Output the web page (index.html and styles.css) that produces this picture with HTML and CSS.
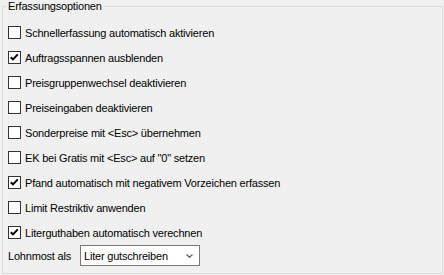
FILE: index.html
```html
<!DOCTYPE html>
<html>
<head>
	<meta charset="UTF-8">
	<title>Erfassungsoptionen</title>
	<link rel="stylesheet" href="styles.css">
</head>
<body>

<fieldset class="group">
	<legend>Erfassungsoptionen</legend>

	<div class="options">
		<div class="option"><span class="box"></span><span>Schnellerfassung automatisch aktivieren</span></div>
		<div class="option"><span class="box"><svg viewBox="0 0 11 11"><polyline points="1.8,5.2 4,7.4 8.8,2.4"/></svg></span><span>Auftragsspannen ausblenden</span></div>
		<div class="option"><span class="box"></span><span>Preisgruppenwechsel deaktivieren</span></div>
		<div class="option"><span class="box"></span><span>Preiseingaben deaktivieren</span></div>
		<div class="option"><span class="box"></span><span>Sonderpreise mit &lt;Esc&gt; übernehmen</span></div>
		<div class="option"><span class="box"></span><span>EK bei Gratis mit &lt;Esc&gt; auf "0" setzen</span></div>
		<div class="option"><span class="box"><svg viewBox="0 0 11 11"><polyline points="1.8,5.2 4,7.4 8.8,2.4"/></svg></span><span>Pfand automatisch mit negativem Vorzeichen erfassen</span></div>
		<div class="option"><span class="box"></span><span>Limit Restriktiv anwenden</span></div>
		<div class="option"><span class="box"><svg viewBox="0 0 11 11"><polyline points="1.8,5.2 4,7.4 8.8,2.4"/></svg></span><span>Literguthaben automatisch verechnen</span></div>
	</div>

	<div class="combo-row">
		<label for="lohnmost">Lohnmost als</label>
		<div class="combo" id="lohnmost">
			<span>Liter gutschreiben</span>
			<svg class="arrow" viewBox="0 0 7 4"><polyline points="0.5,0.5 3.5,3.3 6.5,0.5"/></svg>
		</div>
	</div>
</fieldset>

</body>
</html>
```

FILE: styles.css
```css
html, body{
	margin: 0;
	background-color: #f0f0f0;
}
body{
	font-family: "Liberation Sans", Arial, sans-serif;
	font-size: 11px;
	letter-spacing: -0.2px;
	color: #000;
}

.group{
	box-sizing: border-box;
	width: 441px;
	height: 274px;
	margin: 0 0 0 2px;
	padding: 0 0 0 5px;
	border: 1px solid #dcdcdc;
}
.group legend{
	padding: 0 1px;
	line-height: 13px;
	margin-left: -1px;
}

.options{
	margin-top: 7px;
}
.option{
	display: flex;
	align-items: center;
	height: 25px;
}
.box{
	box-sizing: border-box;
	width: 13px;
	height: 13px;
	margin-right: 4px;
	border: 1px solid #333;
	background-color: #fff;
	flex: none;
}
.box svg{
	display: block;
	width: 11px;
	height: 11px;
}
.box polyline{
	fill: none;
	stroke: #000;
	stroke-width: 2;
}

.combo-row{
	display: flex;
	align-items: center;
	height: 21px;
}
.combo-row label{
	width: 72px;
}
.combo{
	box-sizing: border-box;
	display: flex;
	align-items: center;
	justify-content: space-between;
	width: 120px;
	height: 21px;
	padding: 0 6px 0 3px;
	border: 1px solid #7a7a7a;
	background-color: #fff;
}
.combo .arrow{
	width: 7px;
	height: 4px;
}
.combo polyline{
	fill: none;
	stroke: #606060;
	stroke-width: 1.2;
}
```
